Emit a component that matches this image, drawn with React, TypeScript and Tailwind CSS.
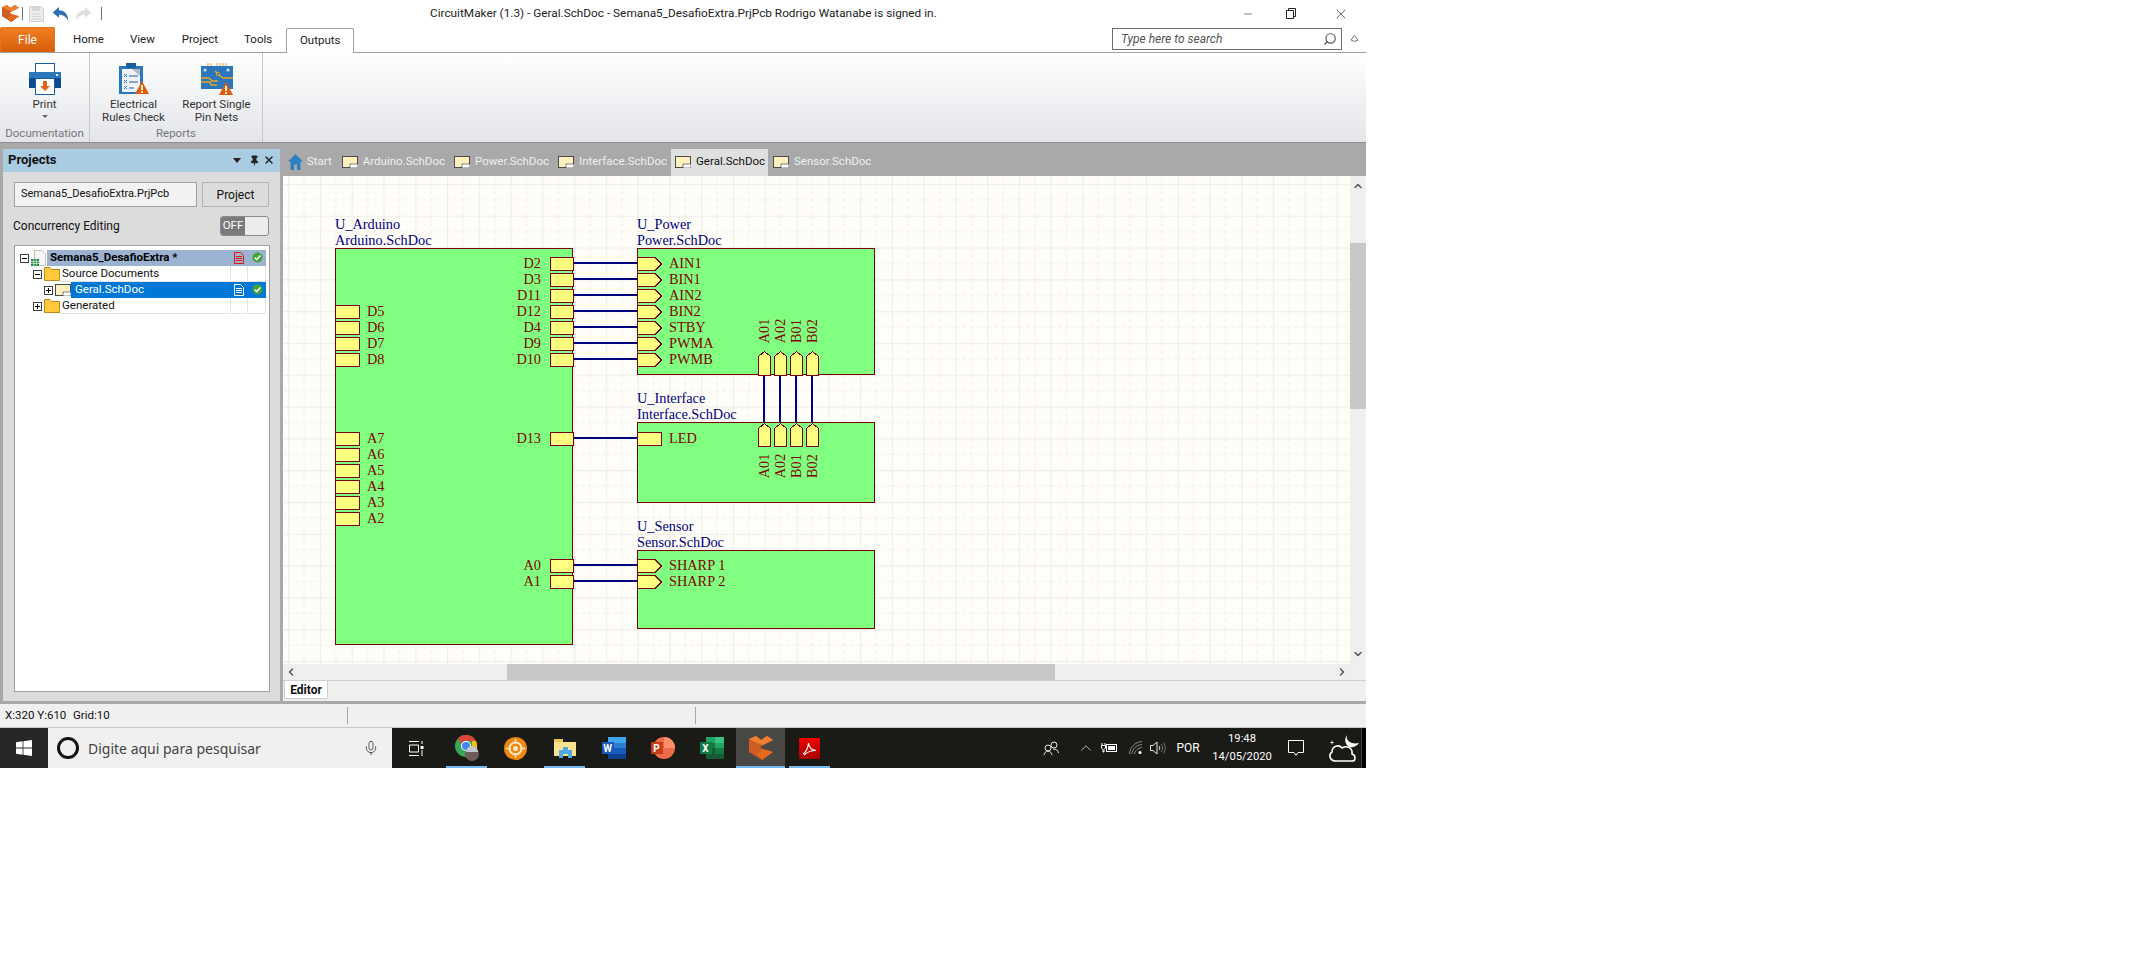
import { ChevronDown, ChevronLeft, ChevronRight, ChevronUp, Mic, Minus, Pin, Search, X } from "lucide-react";

// schematic data, in canvas coordinates
const rows = [87, 103, 119, 135, 151, 167, 183];
const topPins = [
  { name: "A01", x: 481 },
  { name: "A02", x: 497 },
  { name: "B01", x: 513 },
  { name: "B02", x: 529 },
];
const sheets = [
  { name: "U_Arduino", file: "Arduino.SchDoc", left: 52, top: 72, w: 238, h: 397 },
  { name: "U_Power", file: "Power.SchDoc", left: 354, top: 72, w: 238, h: 127 },
  { name: "U_Interface", file: "Interface.SchDoc", left: 354, top: 246, w: 238, h: 81 },
  { name: "U_Sensor", file: "Sensor.SchDoc", left: 354, top: 374, w: 238, h: 79 },
];
const rightPins = [
  { name: "D2", y: rows[0] },
  { name: "D3", y: rows[1] },
  { name: "D11", y: rows[2] },
  { name: "D12", y: rows[3] },
  { name: "D4", y: rows[4] },
  { name: "D9", y: rows[5] },
  { name: "D10", y: rows[6] },
  { name: "D13", y: 262 },
  { name: "A0", y: 389 },
  { name: "A1", y: 405 },
];
const leftPins = [
  { name: "D5", y: 135 },
  { name: "D6", y: 151 },
  { name: "D7", y: 167 },
  { name: "D8", y: 183 },
  { name: "A7", y: 262 },
  { name: "A6", y: 278 },
  { name: "A5", y: 294 },
  { name: "A4", y: 310 },
  { name: "A3", y: 326 },
  { name: "A2", y: 342 },
];
const inputPins = [
  { name: "AIN1", y: rows[0], arrow: true },
  { name: "BIN1", y: rows[1], arrow: true },
  { name: "AIN2", y: rows[2], arrow: true },
  { name: "BIN2", y: rows[3], arrow: true },
  { name: "STBY", y: rows[4], arrow: true },
  { name: "PWMA", y: rows[5], arrow: true },
  { name: "PWMB", y: rows[6], arrow: true },
  { name: "LED", y: 262, arrow: false },
  { name: "SHARP 1", y: 389, arrow: true },
  { name: "SHARP 2", y: 405, arrow: true },
];

function Logo({ size = 16 }: { size?: number }) {
  return (
    <svg width={size} height={size} viewBox="0 0 24 24">
      <polygon points="0,3 7,0 12,4 18,0 24,4 14,9 11,11 14,13 24,16 13,24 0,16" fill="#cf5d22" />
      <polygon points="0,3 7,0 12,4 18,0 24,4 14,9 8,7" fill="#ef7f2f" />
      <polygon points="14,13 24,16 13,24 8,18" fill="#e2691d" />
    </svg>
  );
}

function SmallDoc() {
  return (
    <svg width="16" height="12" viewBox="0 0 16 12" className="shrink-0">
      <rect x="0.5" y="0.5" width="15" height="11" fill="#fff0bf" stroke="#4a4a4a" />
      <rect x="8" y="8" width="8" height="4" fill="#ffffff" stroke="#4a4a4a" strokeWidth="0.7" />
    </svg>
  );
}

function Folder() {
  return (
    <svg width="16" height="14" viewBox="0 0 16 14" className="shrink-0">
      <path d="M0.5 13.5V0.5H6L7.5 2.5H15.5V13.5Z" fill="#ffc83d" stroke="#b88a1c" />
    </svg>
  );
}

function Expander({ open }: { open: boolean }) {
  return (
    <svg width="9" height="9" viewBox="0 0 9 9" className="shrink-0">
      <rect x="0.5" y="0.5" width="8" height="8" fill="#ffffff" stroke="#404040" />
      <path d={open ? "M2 4.5H7" : "M2 4.5H7M4.5 2V7"} stroke="#000000" />
    </svg>
  );
}

function PageGlyph({ color }: { color: string }) {
  return (
    <svg width="10" height="12" viewBox="0 0 10 12" className="shrink-0">
      <path d="M0.5 0.5H6.5L9.5 3.5V11.5H0.5Z" fill="none" stroke={color} />
      <path d="M2 4.5H8M2 6.5H8M2 8.5H8" stroke={color} />
    </svg>
  );
}

function Check() {
  return (
    <svg width="11" height="11" viewBox="0 0 11 11" className="shrink-0">
      <circle cx="5.5" cy="5.5" r="5" fill="#3fa535" />
      <path d="M2.8 5.6L4.8 7.6L8.4 3.6" stroke="#ffffff" strokeWidth="1.5" fill="none" />
    </svg>
  );
}

function Warning({ x, y }: { x: number; y: number }) {
  return (
    <g transform={`translate(${x} ${y})`}>
      <polygon points="7,0 14,13 0,13" fill="#e05a10" />
      <rect x="6" y="4" width="2" height="5" fill="#fff1c0" />
      <rect x="6" y="10" width="2" height="2" fill="#fff1c0" />
    </g>
  );
}

function PrintIcon() {
  return (
    <svg width="32" height="32" viewBox="0 0 32 32">
      <rect x="6.5" y="0.5" width="19" height="10" fill="#ffffff" stroke="#1a5ea8" />
      <rect x="0" y="9" width="32" height="6" fill="#2a77bd" />
      <rect x="0" y="15" width="32" height="10" fill="#0c4a8e" />
      <rect x="27" y="11" width="2" height="2" fill="#ffffff" />
      <rect x="6.5" y="15.5" width="19" height="16" fill="#ffffff" stroke="#1a5ea8" />
      <path d="M14 18H18V23H21L16 28L11 23H14Z" fill="#e2661a" />
    </svg>
  );
}

function ErcIcon() {
  return (
    <svg width="30" height="32" viewBox="0 0 30 32">
      <rect x="0" y="3" width="24" height="28" fill="#2a77bd" />
      <rect x="7" y="0" width="10" height="5" fill="#1c5e9e" />
      <rect x="3" y="6" width="18" height="23" fill="#eef2f6" />
      <polygon points="13,6 21,6 21,13" fill="#b5b9bd" />
      <path d="M5 11L8 14M8 11L5 14M5 17L8 20M8 17L5 20M5 23L8 26M8 23L5 26" stroke="#2a77bd" />
      <path d="M10 13H19M10 19H19M10 25H15" stroke="#1c5e9e" />
      <Warning x={16} y={18} />
    </svg>
  );
}

function ReportIcon() {
  return (
    <svg width="32" height="32" viewBox="0 0 32 32">
      <path d="M0 3H32V26H0Z" fill="#2a77bd" />
      <path d="M7 0V3M10 0V3M16 0V3M19 0V3M22 0V3M25 0V3" stroke="#e9a33a" />
      <circle cx="4" cy="7" r="1.5" fill="#d9e6f2" />
      <circle cx="27" cy="7" r="1.5" fill="#d9e6f2" />
      <path d="M0 15H8L11 18H17M0 19H9L10 22H16M14 8L18 12L22 15H32" stroke="#efa524" strokeWidth="1.5" fill="none" />
      <circle cx="17" cy="11" r="1.6" fill="#2a77bd" stroke="#efa524" />
      <Warning x={18} y={19} />
    </svg>
  );
}

function TitleBar() {
  return (
    <div className="flex h-[27px] items-center bg-white">
      <div className="flex w-[430px] items-center pl-[2px]">
        <Logo size={17} />
        <div className="ml-[3px] h-[13px] w-px bg-[#707070]" />
        <svg width="15" height="16" viewBox="0 0 15 16" className="ml-[6px]">
          <path d="M0.5 0.5H12L14.5 3V15.5H0.5Z" fill="#eeeeee" stroke="#d0d0d0" />
          <rect x="3" y="1" width="8" height="4" fill="#d6d6d6" />
          <path d="M3 8H12M3 10.5H12M3 13H12" stroke="#d0d0d0" />
        </svg>
        <svg width="17" height="16" viewBox="0 0 22 20" className="ml-[8px]">
          <path d="M1 8L9 1V5C16 5 21 10 21 19C18 13 14 11 9 11V15Z" fill="#2d6fb3" />
        </svg>
        <svg width="17" height="16" viewBox="0 0 22 20" className="ml-[6px]">
          <path d="M21 8L13 1V5C6 5 1 10 1 19C4 13 8 11 13 11V15Z" fill="#dedede" />
        </svg>
        <div className="ml-[9px] h-[13px] w-px bg-[#707070]" />
      </div>
      <div className="text-[11.8px] whitespace-nowrap text-[#222]">
        CircuitMaker (1.3) - Geral.SchDoc - Semana5_DesafioExtra.PrjPcb Rodrigo Watanabe is signed in.
      </div>
      <div className="ml-auto flex items-center">
        <Minus size={12} strokeWidth={1} className="mr-[32px] text-black" />
        <svg width="10" height="11" viewBox="0 0 10 11" className="mr-[37px]">
          <path d="M0.5 2.5H7.5V10.5H0.5ZM2.5 2.5V0.5H9.5V8.5H7.5" fill="none" stroke="#222" />
        </svg>
        <X size={16} strokeWidth={0.9} className="mr-[17px] text-black" />
      </div>
    </div>
  );
}

function RibbonTabs() {
  return (
    <div className="flex h-[26px] items-end border-b border-[#a0a0a0] bg-white text-[11.5px] text-[#222]">
      <div className="flex h-[25px] w-[55px] items-center justify-center rounded-t-[2px] border border-b-0 border-[#d8761f] bg-linear-to-b from-[#f07d1e] to-[#d75e0a] text-[12px] text-white">
        File
      </div>
      <div className="flex h-[25px] items-center pl-[18px]">Home</div>
      <div className="flex h-[25px] items-center pl-[26px]">View</div>
      <div className="flex h-[25px] items-center pl-[27px]">Project</div>
      <div className="flex h-[25px] items-center pl-[26px]">Tools</div>
      <div className="relative top-px ml-[14px] flex h-[25px] w-[68px] items-center justify-center rounded-t-[2px] border border-b-0 border-[#a0a0a0] bg-white">
        Outputs
      </div>
      <div className="absolute top-[28px] left-[1112px] flex h-[22px] w-[230px] items-center border border-[#707070] bg-white pl-2 text-[12px] text-[#555] italic">
        Type here to search
        <Search size={14} className="absolute right-1 -scale-x-100 text-[#555]" />
      </div>
      <svg width="9" height="8" viewBox="0 0 9 8" className="absolute top-[34px] left-[1350px]">
        <path d="M1 6L4.5 1.5L8 6L4.5 7.5Z" fill="none" stroke="#666" />
      </svg>
    </div>
  );
}

function RibbonItem({ icon, lines, width, arrow }: { icon: React.ReactNode; lines: string[]; width: string; arrow?: boolean }) {
  return (
    <div className={`flex flex-col items-center ${width}`}>
      <div className="flex h-[32px] items-center">{icon}</div>
      <div className="mt-[3px] flex flex-col items-center text-[11.5px] leading-[13px] whitespace-nowrap text-[#333]">
        {lines.map((l) => (
          <span key={l}>{l}</span>
        ))}
        {arrow && <span className="mt-[4px] h-0 w-0 border-x-[3px] border-t-[3px] border-x-transparent border-t-[#666]" />}
      </div>
    </div>
  );
}

function Ribbon() {
  return (
    <div className="flex h-[90px] border-b border-[#8f8f8f] bg-linear-to-b from-white to-[#e3e5e9]">
      <div className="flex w-[90px] flex-col items-center border-r border-[#c8c8c8]">
        <div className="pt-[10px]">
          <RibbonItem icon={<PrintIcon />} lines={["Print"]} width="w-[60px]" arrow />
        </div>
        <div className="mt-auto text-[11.5px] text-[#777]">Documentation</div>
      </div>
      <div className="flex w-[173px] flex-col items-center border-r border-[#c8c8c8]">
        <div className="flex gap-[1px] pt-[10px]">
          <RibbonItem icon={<ErcIcon />} lines={["Electrical", "Rules Check"]} width="w-[80px]" />
          <RibbonItem icon={<ReportIcon />} lines={["Report Single", "Pin Nets"]} width="w-[84px]" />
        </div>
        <div className="mt-auto text-[11.5px] text-[#777]">Reports</div>
      </div>
    </div>
  );
}

function TreeRow({ indent, expander, icon, label, selected, head }: {
  indent: string;
  expander: boolean;
  icon: React.ReactNode;
  label: string;
  selected?: boolean;
  head?: boolean;
}) {
  const bg = selected
    ? "bg-[#0078d7] pl-[4px] text-white"
    : head
      ? "ml-[1px] bg-[#9bb3d1] pl-[3px] font-bold text-black"
      : "border-b border-[#e4e4e4] pl-[2px] text-[#111]";
  return (
    <div className={`flex h-[16px] items-center text-[11.5px] ${indent}`}>
      <Expander open={expander} />
      <div className="ml-[2px]">{icon}</div>
      <div className={`flex h-[16px] flex-1 items-center ${bg}`}>
        <span className="flex-1 whitespace-nowrap">{label}</span>
        {head && (
          <div className="flex w-[36px]">
            <div className="flex w-[18px] justify-center"><PageGlyph color="#e01010" /></div>
            <div className="flex w-[18px] justify-center"><Check /></div>
          </div>
        )}
        {selected && (
          <div className="flex w-[36px]">
            <div className="flex w-[18px] justify-center"><PageGlyph color="#ffffff" /></div>
            <div className="flex w-[18px] justify-center"><Check /></div>
          </div>
        )}
        {!head && !selected && (
          <div className="flex h-[16px] w-[36px]">
            <div className="w-[18px] border-x border-[#e4e4e4]" />
            <div className="w-[18px] border-r border-[#e4e4e4]" />
          </div>
        )}
      </div>
    </div>
  );
}

function ProjectsPanel() {
  return (
    <div className="flex w-[277px] flex-col bg-[#dcdcdc]">
      <div className="flex h-[23px] items-center bg-[#a9cce3] pr-[5px] pb-[1px] pl-[5px] text-[13px] font-bold text-[#111]">
        <span className="flex-1">Projects</span>
        <span className="mr-[8px] h-0 w-0 border-x-[4px] border-t-[5px] border-x-transparent border-t-[#222]" />
        <Pin size={11} className="mr-[3px] text-[#222]" fill="#222" />
        <X size={12} strokeWidth={3} className="text-[#222]" />
      </div>
      <div className="mt-[10px] flex px-[11px]">
        <div className="flex h-[25px] w-[183px] items-center border border-[#a0a0a0] bg-[#f2f2f2] pl-[6px] text-[11px] whitespace-nowrap text-[#111]">
          Semana5_DesafioExtra.PrjPcb
        </div>
        <div className="ml-[5px] flex h-[25px] w-[67px] items-center justify-center border border-[#b4b4b4] bg-[#dcdcdc] text-[12px] text-[#111]">
          Project
        </div>
      </div>
      <div className="mt-[9px] flex h-[20px] items-center pr-[11px] pl-[10px] text-[12px] text-[#111]">
        <span className="flex-1">Concurrency Editing</span>
        <div className="flex h-[20px] w-[49px] overflow-hidden rounded-[3px] border border-[#8a8a8a] bg-[#ececec]">
          <div className="flex w-[24px] items-center justify-center bg-[#7a7a7a] text-[11.5px] text-white">OFF</div>
        </div>
      </div>
      <div className="mt-[9px] mr-[10px] ml-[11px] flex h-[447px] flex-col border border-[#a0a0a0] bg-white pt-[4px] pr-[3px]">
        <TreeRow
          indent="pl-[5px]"
          expander
          head
          label="Semana5_DesafioExtra *"
          icon={
            <svg width="15" height="17" viewBox="0 0 15 17">
              <path d="M3.5 0.5H11L14.5 4V15.5H3.5Z" fill="#f6f6f6" stroke="#c0c0c0" />
              <rect x="0" y="9" width="8" height="7" fill="#1e8c45" />
              <path d="M0 11.5H8M0 13.5H8M2.7 9V16M5.3 9V16" stroke="#ffffff" strokeWidth="0.6" />
            </svg>
          }
        />
        <TreeRow indent="pl-[18px]" expander label="Source Documents" icon={<Folder />} />
        <TreeRow indent="pl-[29px]" expander={false} selected label="Geral.SchDoc" icon={<SmallDoc />} />
        <TreeRow indent="pl-[18px]" expander={false} label="Generated" icon={<Folder />} />
      </div>
    </div>
  );
}

function DocTab({ label, active }: { label: string; active?: boolean }) {
  return (
    <div className={`flex h-[27px] items-center gap-[5px] pb-[2px] text-[11.5px] whitespace-nowrap ${active ? "bg-[#e0e0e0] pr-[3px] pl-[4px] text-[#111]" : "pr-[4px] pl-[5px] text-[#efefef]"}`}>
      <SmallDoc />
      {label}
    </div>
  );
}

function Canvas() {
  return (
    <div className="relative min-w-0 flex-1 overflow-hidden bg-[#fffdf8] font-['Liberation_Serif',serif] text-[14.3px] leading-none">
      <svg className="absolute inset-0 h-full w-full">
        <defs>
          <pattern id="grid" x="5.16" y="7.9" width="31.77" height="31.8" patternUnits="userSpaceOnUse">
            <path d="M15.9 0V31.8M0 15.9H31.77" stroke="#f2f0e9" strokeWidth="1.1" strokeDasharray="4 3" />
            <path d="M0.5 0V31.8M0 0.5H31.77" stroke="#f0eee8" strokeWidth="1.3" />
          </pattern>
        </defs>
        <rect width="100%" height="100%" fill="url(#grid)" />
      </svg>

      {sheets.map((s) => (
        <div key={s.name}>
          <div
            className="absolute border border-[#800000] bg-[#80ff80]"
            style={{ left: s.left, top: s.top, width: s.w, height: s.h }}
          />
          <div className="absolute text-[#000080]" style={{ left: s.left, top: s.top - 32 }}>
            <div className="h-[16px] leading-[16px] whitespace-nowrap">{s.name}</div>
            <div className="h-[16px] leading-[16px] whitespace-nowrap">{s.file}</div>
          </div>
        </div>
      ))}

      <svg className="absolute inset-0 h-full w-full" shapeRendering="crispEdges">
        {rightPins.map((p) => (
          <g key={p.name}>
            <rect x="291" y={p.y - 1} width="63" height="2" fill="#000080" />
            <rect x="267.5" y={p.y - 5.5} width="23" height="13" fill="#ffff80" stroke="#800000" />
          </g>
        ))}
        {leftPins.map((p) => (
          <rect key={p.name} x="52.5" y={p.y - 5.5} width="24" height="13" fill="#ffff80" stroke="#800000" />
        ))}
        {inputPins.map((p) => (
          <polygon
            key={p.name}
            points={
              p.arrow
                ? `354.5,${p.y - 5.5} 372,${p.y - 5.5} 378.5,${p.y + 1} 372,${p.y + 7.5} 354.5,${p.y + 7.5}`
                : `354.5,${p.y - 5.5} 378.5,${p.y - 5.5} 378.5,${p.y + 7.5} 354.5,${p.y + 7.5}`
            }
            fill="#ffff80"
            stroke="#800000"
          />
        ))}
        {topPins.map((p) => (
          <g key={p.name}>
            <rect x={p.x - 1} y="199" width="2" height="48" fill="#000080" />
            <polygon
              points={`${p.x - 5.5},180.5 ${p.x + 0.5},175.5 ${p.x + 6.5},180.5 ${p.x + 6.5},199.5 ${p.x - 5.5},199.5`}
              fill="#ffff80"
              stroke="#800000"
            />
            <polygon
              points={`${p.x - 5.5},252.5 ${p.x + 0.5},247.5 ${p.x + 6.5},252.5 ${p.x + 6.5},270.5 ${p.x - 5.5},270.5`}
              fill="#ffff80"
              stroke="#800000"
            />
          </g>
        ))}
      </svg>

      {rightPins.map((p) => (
        <span key={p.name} className="absolute -translate-x-full -translate-y-1/2 whitespace-nowrap text-[#800000]" style={{ left: 258, top: p.y }}>
          {p.name}
        </span>
      ))}
      {leftPins.map((p) => (
        <span key={p.name} className="absolute -translate-y-1/2 whitespace-nowrap text-[#800000]" style={{ left: 84, top: p.y }}>
          {p.name}
        </span>
      ))}
      {inputPins.map((p) => (
        <span key={p.name} className="absolute -translate-y-1/2 whitespace-nowrap text-[#800000]" style={{ left: 386, top: p.y }}>
          {p.name}
        </span>
      ))}
      {topPins.map((p) => (
        <div key={p.name}>
          <span className="absolute -translate-x-1/2 -translate-y-1/2 -rotate-90 text-[#800000]" style={{ left: p.x, top: 155 }}>
            {p.name}
          </span>
          <span className="absolute -translate-x-1/2 -translate-y-1/2 -rotate-90 text-[#800000]" style={{ left: p.x, top: 290 }}>
            {p.name}
          </span>
        </div>
      ))}
    </div>
  );
}

function Editor() {
  return (
    <div className="ml-[3px] flex min-w-0 flex-1 flex-col bg-[#efefef]">
      <div className="flex h-[27px] items-center bg-[#a9a9a9]">
        <div className="flex items-center gap-[4px] pr-[5px] pb-[2px] pl-[5px] text-[11.5px] text-[#efefef]">
          <svg width="15" height="16" viewBox="0 0 15 16">
            <path d="M7.5 0L15 7.5H12.5V16H9V10.5H6V16H2.5V7.5H0Z" fill="#2f7fc4" />
          </svg>
          Start
        </div>
        <DocTab label="Arduino.SchDoc" />
        <DocTab label="Power.SchDoc" />
        <DocTab label="Interface.SchDoc" />
        <DocTab label="Geral.SchDoc" active />
        <DocTab label="Sensor.SchDoc" />
      </div>
      <div className="flex h-[488px]">
        <Canvas />
        <div className="flex w-[16px] flex-col items-center bg-[#efefef]">
          <ChevronUp size={12} strokeWidth={3} className="mt-[4px] text-[#555]" />
          <div className="mt-[51px] h-[166px] w-full bg-[#c8c8c8]" />
          <ChevronDown size={12} strokeWidth={3} className="mt-auto mb-[4px] text-[#555]" />
        </div>
      </div>
      <div className="flex h-[17px] items-center border-b border-[#cfcfcf] bg-[#efefef] pl-[2px]">
        <ChevronLeft size={12} strokeWidth={3} className="text-[#555]" />
        <div className="ml-[210px] h-[16px] w-[548px] bg-[#c8c8c8]" />
        <ChevronRight size={12} strokeWidth={3} className="ml-[281px] text-[#555]" />
      </div>
      <div className="flex h-[20px] items-start bg-[#efefef] pl-[1px]">
        <div className="flex h-[18px] w-[44px] items-center justify-center rounded-b-[2px] border border-t-0 border-[#d0d0d0] bg-white text-[12px] font-bold text-[#111]">
          Editor
        </div>
      </div>
    </div>
  );
}

function StatusBar() {
  return (
    <div className="flex h-[24px] items-center border-b border-[#c8c8c8] bg-[#f0f0f0] pl-[5px] text-[11.5px] text-[#111]">
      <span className="w-[68px] whitespace-nowrap">X:320 Y:610</span>
      <span className="w-[274px]">Grid:10</span>
      <div className="h-[17px] w-px bg-[#a8a8a8]" />
      <div className="ml-[347px] h-[17px] w-px bg-[#a8a8a8]" />
    </div>
  );
}

function TaskIcon({ children, marked, active }: { children: React.ReactNode; marked?: boolean; active?: boolean }) {
  return (
    <div className={`relative flex h-[40px] w-[49px] shrink-0 items-center justify-center ${active ? "bg-[#4a4845]" : ""}`}>
      {children}
      {marked && <div className={`absolute bottom-0 h-[2px] bg-[#76b9ed] ${active ? "inset-x-0" : "inset-x-[4px]"}`} />}
    </div>
  );
}

function Taskbar() {
  return (
    <div className="flex h-[40px] bg-[#1a1a17] text-white">
      <div className="flex w-[48px] items-center justify-center bg-[#272727]">
        <svg width="16" height="16" viewBox="0 0 16 16">
          <path d="M0 2.2L6.6 1.3V7.6H0ZM7.4 1.2L16 0V7.6H7.4ZM0 8.4H6.6V14.7L0 13.8ZM7.4 8.4H16V16L7.4 14.8Z" fill="#ffffff" />
        </svg>
      </div>
      <div className="flex w-[344px] items-center bg-[#f0f0f0] pl-[9px] text-[#444]">
        <div className="h-[22px] w-[22px] rounded-full border-[3px] border-[#111]" />
        <span className="ml-[9px] flex-1 font-['Noto_Sans',sans-serif] text-[14px] whitespace-nowrap">Digite aqui para pesquisar</span>
        <Mic size={16} strokeWidth={1.2} className="mr-[13px] text-[#333]" />
      </div>
      <div className="flex w-[48px] items-center justify-center">
        <svg width="16" height="15" viewBox="0 0 16 15">
          <path d="M1 0.5H11M1 14.5H11M1.5 4H10.5V11H1.5ZM14 0V3M14 9V15" stroke="#ffffff" fill="none" />
          <rect x="12.5" y="5" width="3" height="3" fill="#ffffff" />
        </svg>
      </div>
      <div className="flex pl-[2px]">
        <TaskIcon marked>
          <svg width="24" height="26" viewBox="0 0 24 26">
            <circle cx="11" cy="11" r="11" fill="#3aa757" />
            <path d="M11 0A11 11 0 0 1 21 6H11A5 5 0 0 0 6 9L3 3A11 11 0 0 1 11 0Z" fill="#db4437" />
            <path d="M21 6A11 11 0 0 1 12 22L17 12V6Z" fill="#f4c20d" />
            <circle cx="11" cy="11" r="5" fill="#ffffff" />
            <circle cx="11" cy="11" r="4" fill="#4285f4" />
            <circle cx="17" cy="19" r="7" fill="#6d5a5a" />
            <path d="M11 17A6 6 0 0 1 23 17Z" fill="#c4c7cc" />
          </svg>
        </TaskIcon>
        <TaskIcon>
          <svg width="23" height="23" viewBox="0 0 23 23">
            <circle cx="11.5" cy="11.5" r="11.5" fill="#f0870f" />
            <circle cx="11.5" cy="11.5" r="6" fill="none" stroke="#ffe8c8" strokeWidth="2" />
            <circle cx="11.5" cy="11.5" r="2.5" fill="#ffe8c8" />
            <path d="M11.5 2V7M11.5 16V21M2 11.5H7M16 11.5H21" stroke="#ffe8c8" strokeWidth="1.5" />
          </svg>
        </TaskIcon>
        <TaskIcon marked>
          <svg width="22" height="19" viewBox="0 0 22 19">
            <path d="M0 1H8L9 3H22V17H0Z" fill="#fbe08f" />
            <rect x="0" y="0" width="9" height="3" fill="#f1c644" />
            <path d="M5 19V11H9V8H14V11H18V19H14V15H9V19Z" fill="#4fa8e8" />
          </svg>
        </TaskIcon>
        <TaskIcon>
          <div className="relative h-[22px] w-[24px]">
            <div className="absolute top-0 right-0 flex h-[22px] w-[18px] flex-col">
              <div className="flex-1 bg-[#41a5ee]" />
              <div className="flex-1 bg-[#2b7cd3]" />
              <div className="flex-1 bg-[#185abd]" />
              <div className="flex-1 bg-[#103f91]" />
            </div>
            <div className="absolute top-[5px] left-0 flex h-[12px] w-[12px] items-center justify-center bg-[#185abd] text-[10px] font-bold text-white">W</div>
          </div>
        </TaskIcon>
        <TaskIcon>
          <div className="relative h-[22px] w-[24px]">
            <div className="absolute top-0 right-0 h-[22px] w-[22px] overflow-hidden rounded-full bg-[#ed6c47]">
              <div className="absolute top-0 right-0 h-[11px] w-[11px] bg-[#ff8f6b]" />
            </div>
            <div className="absolute top-[5px] left-0 flex h-[12px] w-[12px] items-center justify-center bg-[#c43e1c] text-[10px] font-bold text-white">P</div>
          </div>
        </TaskIcon>
        <TaskIcon>
          <div className="relative h-[22px] w-[24px]">
            <div className="absolute top-0 right-0 grid h-[22px] w-[18px] grid-cols-2 grid-rows-4">
              <div className="bg-[#21a366]" />
              <div className="bg-[#33c481]" />
              <div className="bg-[#107c41]" />
              <div className="bg-[#21a366]" />
              <div className="bg-[#185c37]" />
              <div className="bg-[#107c41]" />
              <div className="bg-[#185c37]" />
              <div className="bg-[#185c37]" />
            </div>
            <div className="absolute top-[5px] left-0 flex h-[12px] w-[12px] items-center justify-center bg-[#107c41] text-[10px] font-bold text-white">X</div>
          </div>
        </TaskIcon>
        <TaskIcon marked active>
          <Logo size={24} />
        </TaskIcon>
        <TaskIcon marked>
          <div className="flex h-[21px] w-[21px] items-center justify-center bg-linear-to-b from-[#ee0000] to-[#a80000]">
            <svg width="15" height="15" viewBox="0 0 15 15">
              <path d="M1 13C4 11 6 7 6.5 2C7 6 9 9 14 9.5C10 9.5 5 11 2 14" fill="none" stroke="#ffffff" strokeWidth="1.2" />
            </svg>
          </div>
        </TaskIcon>
      </div>
      <div className="ml-auto flex items-center text-[12px]">
        <svg width="17" height="17" viewBox="0 0 17 17" className="mr-[17px]">
          <circle cx="11" cy="5" r="3" fill="none" stroke="#e8e8e8" />
          <circle cx="5" cy="8" r="3" fill="none" stroke="#e8e8e8" />
          <path d="M1 15C1.5 10 8.5 10 9 15M10 9C13 9 15 10 15.5 13" fill="none" stroke="#e8e8e8" />
        </svg>
        <ChevronUp size={18} strokeWidth={1} className="mr-[6px] text-[#e8e8e8]" />
        <svg width="16" height="12" viewBox="0 0 16 12" className="mr-[12px]">
          <path d="M1 1V3M4 1V3M0.5 3.5H4.5V6L3 7.5V10H2V7.5L0.5 6Z" stroke="#ffffff" fill="none" />
          <rect x="5.5" y="2.5" width="10" height="7" fill="none" stroke="#ffffff" />
          <rect x="7" y="4" width="7" height="4" fill="#ffffff" />
        </svg>
        <svg width="14" height="14" viewBox="0 0 14 14" className="mr-[7px]">
          <path d="M0.5 13C1 6 6 1 13 0.5M3 13C3.5 8 7 4 13 3.5M5.5 13C6 10 8.5 7 13 6.5" fill="none" stroke="#8a8a8a" />
          <circle cx="11" cy="11.5" r="1.5" fill="#ffffff" />
        </svg>
        <svg width="16" height="14" viewBox="0 0 16 14" className="mr-[10px]">
          <path d="M0.5 4.5H3L7 1V13L3 9.5H0.5Z" fill="none" stroke="#e8e8e8" />
          <path d="M9 5C10 6 10 8 9 9" fill="none" stroke="#e8e8e8" />
          <path d="M11 3C13 5 13 9 11 11M13 1.5C16 4 16 10 13 12.5" fill="none" stroke="#777777" />
        </svg>
        <span className="w-[24px] text-center">POR</span>
        <div className="ml-[13px] flex w-[58px] flex-col items-center text-[11.2px] leading-[18px]">
          <span>19:48</span>
          <span>14/05/2020</span>
        </div>
        <svg width="16" height="17" viewBox="0 0 16 17" className="mr-[23px] ml-[17px]">
          <path d="M0.5 0.5H15.5V12.5H10L8 15.5L6 12.5H0.5Z" fill="none" stroke="#ffffff" />
        </svg>
        <svg width="33" height="29" viewBox="0 0 33 29">
          <path d="M9 27C3 27 1 21 5 18C5 12 12 10 15 14C20 11 26 14 25 20C29 21 29 27 25 27Z" fill="none" stroke="#ffffff" strokeWidth="1.6" />
          <path d="M20 1C18 6 24 11 32 9C30 12 26 14 22 13C18 10 17 5 20 1Z" fill="#ffffff" />
          <path d="M5 6L5.5 8L7.5 8.5L5.5 9L5 11L4.5 9L2.5 8.5L4.5 8Z" fill="#ffffff" />
        </svg>
        <div className="ml-[1px] h-[40px] w-[5px] border-l border-[#444] bg-black" />
      </div>
    </div>
  );
}

export default function App() {
  return (
    <div className="h-[980px] w-[2154px] bg-white font-['Roboto',sans-serif]">
      <div className="flex h-[768px] w-[1366px] flex-col overflow-hidden">
        <TitleBar />
        <RibbonTabs />
        <Ribbon />
        <div className="flex h-[561px] bg-[#a9a9a9] pt-[6px] pb-[3px] pl-[3px]">
          <ProjectsPanel />
          <Editor />
        </div>
        <StatusBar />
        <Taskbar />
      </div>
    </div>
  );
}
